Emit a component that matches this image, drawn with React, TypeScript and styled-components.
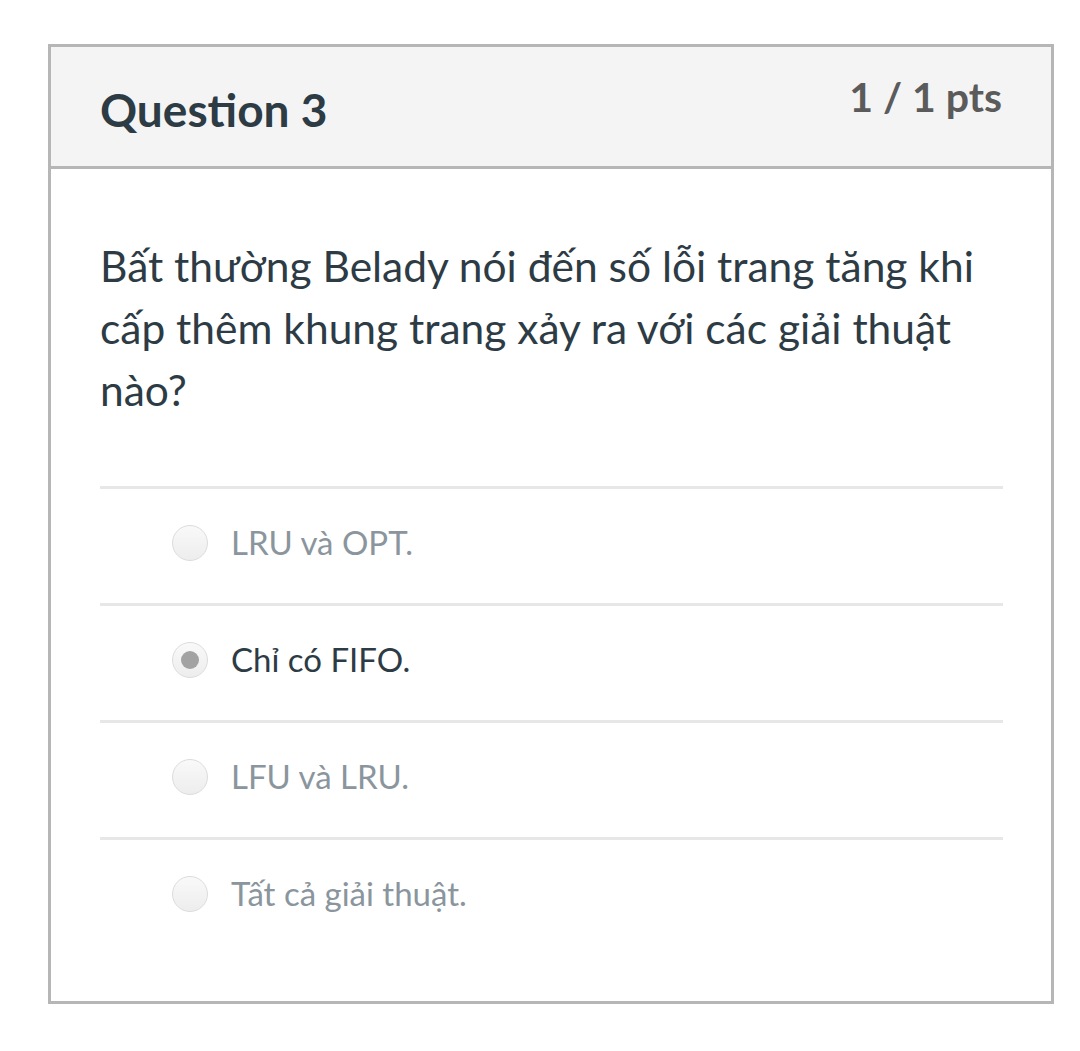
import React from "react";
import styled, { createGlobalStyle } from "styled-components";

const Global = createGlobalStyle`
  html, body { margin: 0; padding: 0; background: #ffffff; }
  body { font-family: Lato, "Noto Sans", sans-serif; }
`;

const Card = styled.section`
  box-sizing: border-box;
  margin: 44px 0 0 48px;
  width: 1006px;
  border: 3px solid #b6b6b6;
  background: #ffffff;
`;

const Header = styled.header`
  display: flex;
  justify-content: space-between;
  align-items: flex-start;
  height: 122px;
  box-sizing: border-box;
  padding: 25px 49px 0 49px;
  background: #f4f4f4;
  border-bottom: 3px solid #b6b6b6;
`;

const Title = styled.h2`
  margin: 10px 0 0 0;
  font-family: Lato, sans-serif;
  font-weight: 700;
  font-size: 46px;
  line-height: 1.2;
  color: #2d3b45;
`;

const Points = styled.div`
  font-family: Lato, sans-serif;
  font-weight: 700;
  font-size: 41px;
  line-height: 1.2;
  color: #5b5b5b;
`;

const Body = styled.div`
  padding: 66px 48px 47px 49px;
`;

const QuestionText = styled.p`
  margin: 0 0 65px 0;
  font-family: Lato, sans-serif;
  font-size: 42.5px;
  line-height: 62px;
  color: #2d3b45;
`;

const Answers = styled.div`
  display: flex;
  flex-direction: column;
`;

const Answer = styled.label`
  display: flex;
  align-items: center;
  gap: 23px;
  height: 117px;
  box-sizing: border-box;
  padding: 0 0 6px 72px;
  border-top: 3px solid #e7e7e7;
`;

const Radio = styled.span<{ $checked?: boolean }>`
  position: relative;
  flex: none;
  width: 36px;
  height: 36px;
  border-radius: 50%;
  box-sizing: border-box;
  border: 1px solid #dcdcdc;
  background: linear-gradient(#f9f9f9, #ededed);
  &::after {
    content: "";
    display: ${(p) => (p.$checked ? "block" : "none")};
    position: absolute;
    left: 8px;
    top: 8px;
    width: 18px;
    height: 18px;
    border-radius: 50%;
    background: #a2a2a2;
  }
`;

const AnswerText = styled.span<{ $checked?: boolean }>`
  font-family: Lato, sans-serif;
  font-size: 33px;
  line-height: 1.2;
  color: ${(p) => (p.$checked ? "#2d3b45" : "#8a959d")};
`;

const answers = [
  { text: "LRU và OPT.", checked: false },
  { text: "Chỉ có FIFO.", checked: true },
  { text: "LFU và LRU.", checked: false },
  { text: "Tất cả giải thuật.", checked: false },
];

export default function App() {
  return (
    <>
      <Global />
      <Card>
        <Header>
          <Title>Question 3</Title>
          <Points>1 / 1 pts</Points>
        </Header>
        <Body>
          <QuestionText>
            Bất thường Belady nói đến số lỗi trang tăng khi cấp thêm khung trang xảy ra với các giải thuật nào?
          </QuestionText>
          <Answers>
            {answers.map((a) => (
              <Answer key={a.text}>
                <Radio $checked={a.checked} />
                <AnswerText $checked={a.checked}>{a.text}</AnswerText>
              </Answer>
            ))}
          </Answers>
        </Body>
      </Card>
    </>
  );
}
